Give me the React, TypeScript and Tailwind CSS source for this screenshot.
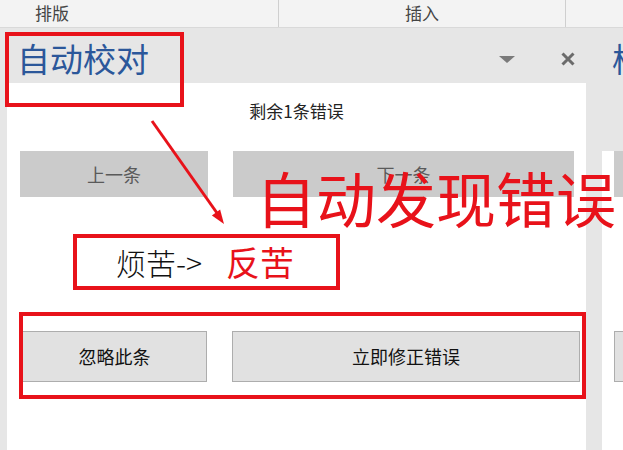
import React from "react";

const RED = "#e8121a";

function Ribbon() {
  return (
    <div className="flex h-[28px] border-b border-[#d9d9d9] bg-[#f3f3f3] text-[17px] text-[#444]">
      <div className="w-[279px] border-r border-[#cfcfcf] pl-[35px] pt-[3px] leading-[20px]">
        排版
      </div>
      <div className="w-[287px] border-r border-[#cfcfcf] pt-[3px] text-center leading-[20px]">
        插入
      </div>
      <div className="flex-1" />
    </div>
  );
}

function PanelHeader() {
  return (
    <div className="flex h-[55px] items-start">
      <h1 className="pl-[10px] pt-[14px] text-[33px] leading-none text-[#2b579a]">
        自动校对
      </h1>
      <div className="ml-auto flex items-center gap-[46px] pr-[11px] pt-[24px]">
        <svg width="16" height="7" viewBox="0 0 16 7">
          <polygon points="0,0 16,0 8,7" fill="#7a7a7a" />
        </svg>
        <svg width="14" height="14" viewBox="0 0 14 14">
          <path
            d="M1.5 1.5 L12.5 12.5 M12.5 1.5 L1.5 12.5"
            stroke="#6b6b6b"
            strokeWidth="3"
          />
        </svg>
      </div>
    </div>
  );
}

function PanelBody() {
  return (
    <div className="flex h-[367px] flex-col bg-white">
      <p className="mt-[18px] h-[20px] text-center text-[17px] leading-[20px] text-[#222]">
        剩余1条错误
      </p>

      <div className="mt-[30px] flex gap-[25px] pl-[13px] pr-[12px]">
        <button className="h-[46px] w-[188px] bg-[#cbcbcb] text-[18px] text-[#5a5a5a]">
          上一条
        </button>
        <button className="h-[46px] flex-1 bg-[#cbcbcb] text-[18px] text-[#5a5a5a]">
          下一条
        </button>
      </div>

      <div
        className="ml-[66px] mt-[37px] flex h-[56px] w-[267px] items-center border-4 pl-[39px]"
        style={{ borderColor: RED }}>
        <span className="text-[30px] font-light leading-none text-[#111]">
          烦苦-&gt;
        </span>
        <span className="ml-[24px] text-[34px] leading-none text-[#e8121a]">
          反苦
        </span>
      </div>

      <div
        className="ml-[12px] mt-[22px] flex w-[567px] gap-[25px] border-4 pb-[13px] pr-[2px] pt-[15px]"
        style={{ borderColor: RED }}>
        <button className="h-[51px] w-[184px] border-y border-r border-[#adadad] bg-[#e1e1e1] text-[18px] text-[#111]">
          忽略此条
        </button>
        <button className="h-[51px] flex-1 border border-[#adadad] bg-[#e1e1e1] text-[18px] text-[#111]">
          立即修正错误
        </button>
      </div>
    </div>
  );
}

function Annotations() {
  return (
    <>
      <div
        className="pointer-events-none absolute left-[5px] top-[32px] h-[75px] w-[179px] border-4"
        style={{ borderColor: RED }}
      />
      <svg
        className="pointer-events-none absolute left-0 top-0"
        width="623"
        height="450">
        <line x1="152" y1="121" x2="217" y2="213" stroke={RED} strokeWidth="3" />
        <polygon points="224,224 211.9,215.4 220.1,209.6" fill={RED} />
      </svg>
      <div className="pointer-events-none absolute left-[256px] top-[167px] whitespace-nowrap text-[60px] leading-none text-[#e8121a]">
        自动发现错误
      </div>
    </>
  );
}

export default function App() {
  return (
    <div
      className="relative h-[450px] w-[623px] overflow-hidden bg-white"
      style={{ fontFamily: '"Noto Sans CJK SC", "Noto Sans", sans-serif' }}>
      <Ribbon />
      <div className="flex">
        <div className="w-[600px] bg-[#e6e6e6] pl-[7px] pr-[8px]">
          <PanelHeader />
          <PanelBody />
        </div>
        <div className="w-px bg-[#c9c9c9]" />
        <div className="flex-1 bg-[#e6e6e6] pl-[8px]">
          <div className="h-[55px] overflow-hidden whitespace-nowrap pl-[10px] pt-[14px] text-[33px] leading-none text-[#2b579a]">
            校
          </div>
          <div className="h-[367px] bg-white pl-[12px]">
            <div className="mt-[68px] h-[46px] bg-[#cbcbcb]" />
            <div className="mt-[134px] h-[51px] border border-[#adadad] bg-[#e1e1e1]" />
          </div>
        </div>
      </div>
      <Annotations />
    </div>
  );
}
